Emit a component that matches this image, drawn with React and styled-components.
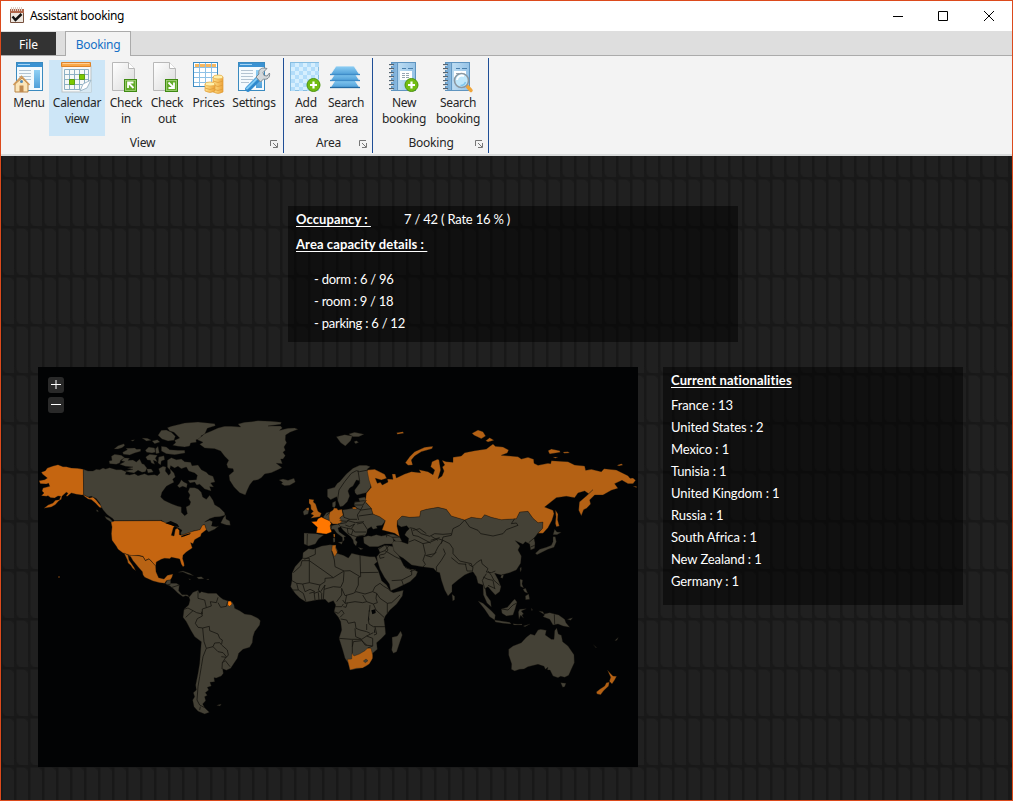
import React from "react";
import styled, { createGlobalStyle } from "styled-components";

const Global = createGlobalStyle`
  * { box-sizing: border-box; }
  body { margin: 0; background: #1f1f1f; }
`;

const Window = styled.div`
  width: 1013px;
  height: 801px;
  display: flex;
  flex-direction: column;
  border: 1px solid #dc4a1c;
  overflow: hidden;
  font-family: "Noto Sans", "Open Sans", sans-serif;
  font-size: 12px;
  color: #262626;
`;

const TitleBar = styled.header`
  flex: none;
  height: 30px;
  background: #fff;
  display: flex;
  align-items: center;
  padding-left: 8px;
`;

const AppIcon = styled.svg`
  margin-top: -2px;
`;

const Title = styled.span`
  flex: 1;
  margin-left: 5px;
  padding-bottom: 1px;
  font-size: 12px;
  letter-spacing: -0.36px;
  color: #000;
`;

const CaptionButton = styled.button`
  width: 46px;
  height: 30px;
  border: 0;
  padding: 0;
  padding-left: ${(p) => p.$shift || 0}px;
  background: none;
  display: grid;
  place-items: center;
`;

const TabStrip = styled.nav`
  flex: none;
  height: 25px;
  background: #dedede;
  border-bottom: 1px solid #ababab;
  display: flex;
  align-items: flex-end;
`;

const FileTab = styled.div`
  width: 55px;
  height: 23px;
  background: #333;
  color: #fff;
  display: grid;
  place-items: center;
  padding-top: 2px;
  letter-spacing: -0.1px;
`;

const ActiveTab = styled.div`
  width: 66px;
  height: 25px;
  margin: 0 0 -1px 9px;
  padding-top: 1px;
  border: 1px solid #ababab;
  border-bottom: 0;
  background: #f3f3f3;
  color: #1470c6;
  display: grid;
  place-items: center;
  letter-spacing: -0.3px;
`;

const Ribbon = styled.section`
  flex: none;
  height: 100px;
  background: #f3f3f3;
  border-bottom: 2px solid #d8dada;
  display: flex;
  padding-top: 2px;
`;

const Group = styled.div`
  width: ${(p) => p.$w}px;
  height: 95px;
  padding: 2px 0 0 ${(p) => p.$pad}px;
  border-right: 1px solid #1f4e96;
  display: flex;
  flex-direction: column;
`;

const Tools = styled.div`
  display: flex;
  height: 76px;
`;

const Tool = styled.button`
  width: ${(p) => p.$w}px;
  height: 76px;
  padding: 0;
  border: 0;
  background: ${(p) => (p.$on ? "#cde6f7" : "none")};
  display: flex;
  flex-direction: column;
  align-items: center;
  font: inherit;
  color: inherit;
`;

const ToolLabel = styled.span`
  margin-top: 1px;
  line-height: 16px;
  white-space: pre;
  text-align: center;
  letter-spacing: -0.3px;
`;

const GroupFooter = styled.div`
  height: 17px;
  display: grid;
  grid-template-columns: 15px 1fr 14px;
  align-items: center;
  text-align: center;
  margin-left: -${(p) => p.$pad}px;
  padding-bottom: 4px;
  line-height: 12px;
  letter-spacing: -0.2px;
`;

const Launcher = styled.svg`
  margin: 4px 0 0 1px;
`;

const Desk = styled.main`
  flex: 1;
  padding: 50px 49px 0 37px;
  display: flex;
  flex-direction: column;
  color: #fff;
  font-family: Lato, sans-serif;
  font-size: 13px;
  background-color: #202020;
  background-image: linear-gradient(45deg, #191919 3px, transparent 5px, transparent calc(100% - 5px), #191919 calc(100% - 3px)),
    linear-gradient(#181818 0 2px, transparent 3px),
    linear-gradient(90deg, #181818 0 2px, transparent 3px);
  background-size: 14px 49px;
  background-position: -1px 21px;
`;

const Panel = styled.section`
  width: ${(p) => p.$w}px;
  height: ${(p) => p.$h}px;
  padding: 2px 8px;
  background: rgba(0, 0, 0, 0.5);
`;

const OccupancyPanel = styled(Panel)`
  margin-left: 250px;
`;

const Lower = styled.div`
  display: flex;
  gap: 25px;
  margin-top: 25px;
`;

const Heading = styled.h2`
  margin: 0;
  width: max-content;
  font-size: 13px;
  font-weight: 700;
  line-height: 22px;
  letter-spacing: ${(p) => p.$track || "0.1px"};
  text-decoration: underline;
  text-underline-offset: 2px;
  white-space: pre;
`;

const OccupancyRow = styled.div`
  display: flex;
  gap: 33px;
  line-height: 22px;
  margin-bottom: 3px;
`;

const Rate = styled.span`
  letter-spacing: -0.2px;
`;

const Capacity = styled.ul`
  margin: 13px 0 0 18px;
  padding: 0;
  list-style: none;
`;

const Countries = styled.ul`
  margin: 3px 0 0;
  padding: 0;
  list-style: none;
`;

const Line = styled.li`
  line-height: 22px;
  letter-spacing: ${(p) => p.$track || "-0.1px"};
`;

const MapFrame = styled.div`
  width: 600px;
  height: 400px;
  background: #020304;
  position: relative;
`;

const ZoomStack = styled.div`
  position: absolute;
  left: 10px;
  top: 10px;
  display: flex;
  flex-direction: column;
  gap: 4px;
`;

const ZoomButton = styled.button`
  width: 16px;
  height: 16px;
  padding: 0;
  border: 0;
  border-radius: 3px;
  background: #292929;
  color: #fff;
  display: grid;
  place-items: center;
`;

const Icon = ({ children }) => (
  <svg width="34" height="34" viewBox="0 0 34 34" fill="none">
    <defs>
      <linearGradient id="page" x1="0" y1="0" x2="1" y2="1">
        <stop offset="0" stopColor="#fff" />
        <stop offset="1" stopColor="#dadada" />
      </linearGradient>
      <linearGradient id="blue" x1="0" y1="0" x2="0" y2="1">
        <stop offset="0" stopColor="#8fd0f5" />
        <stop offset="1" stopColor="#4f9fd8" />
      </linearGradient>
      <linearGradient id="gold" x1="0" y1="0" x2="1" y2="0">
        <stop offset="0" stopColor="#ffe18a" />
        <stop offset="1" stopColor="#eda33a" />
      </linearGradient>
      <linearGradient id="book" x1="0" y1="0" x2="1" y2="0">
        <stop offset="0" stopColor="#6fa5d2" />
        <stop offset=".25" stopColor="#8fbce0" />
        <stop offset=".3" stopColor="#bcdcf2" />
        <stop offset="1" stopColor="#94c2e6" />
      </linearGradient>
    </defs>
    {children}
  </svg>
);

const AppWindow = ({ x }) => (
  <g transform={`translate(${x} 0)`}>
    <rect x=".5" y="2.5" width="26" height="28" fill="#f4fafd" stroke="#3a8abf" />
    <path d="M1 3h25v4H1z" fill="#3b92d2" />
    <path d="M2 4.500h12" stroke="#a5d5f5" />
    <path d="M18 10h6v18h-6z" fill="url(#blue)" />
    <path d="M3 10.500h12M3 13.500h12M3 16.500h12M3 19.500h12M3 22.500h8" stroke="#b3c4d2" />
  </g>
);

const MenuIcon = () => (
  <Icon>
    <AppWindow x={4} />
    <path d="M3 24v8h13v-8l-6-6z" fill="#fbe5b8" stroke="#b98445" />
    <path d="M1.500 25l8-8.500 8 8.500" stroke="#d19a5a" strokeWidth="1.800" />
    <path d="M7.500 25.500h4v6.500h-4z" fill="#c08a50" />
    <circle cx="9.500" cy="21.500" r="1.500" fill="#4e88b8" />
  </Icon>
);

const CalendarIcon = () => (
  <Icon>
    <rect x="2" y="6" width="29" height="26" fill="#f6f8f8" stroke="#bcc3c6" />
    <path d="M1.500 2.500h29v4h-29z" fill="#f9a94a" stroke="#df8328" />
    <path d="M2.500 3.500h27" stroke="#ffcf97" />
    <path d="M4.500 9.500h24v20h-24zM9.500 9v21M14.500 9v21M19.500 9v21M24.500 9v21M4 14.500h25M4 19.500h25M4 24.500h25" stroke="#8db0c4" />
    <path d="M9.500 19.500h5v5h-5zM19.500 14.500h5v5h-5z" fill="#7cc900" stroke="#5a9c14" />
    <path d="M20 32l3-8 8-3v11z" fill="#d7e8f2" />
    <path d="M20 31l3-7 8-4-4 8z" fill="#fff" stroke="#9fb9c9" />
  </Icon>
);

const CheckIcon = ({ out }) => (
  <Icon>
    <path d="M3.500 2.500h16l6 6v22h-22z" fill="url(#page)" stroke="#b8b8b8" />
    <path d="M19.500 2.500v6h6" fill="#fff" stroke="#b8b8b8" />
    <rect x="15.500" y="19.500" width="12" height="12" fill="#62ab28" stroke="#3f8a12" />
    <rect x="16.500" y="20.500" width="10" height="10" stroke="#a5d27e" strokeWidth=".8" />
    <path d={out ? "M18.500 22.500l5 5M24 22.500v5.500h-5.500" : "M19 28v-5.500h5.500M19.500 23l5 5"} stroke="#fff" strokeWidth="1.800" />
  </Icon>
);

const Coin = ({ x, y, n }) => (
  <g transform={`translate(${x} ${y})`}>
    <path d={`M0 2v${n * 4 - 1}q5 3 10 0V2z`} fill="url(#gold)" stroke="#e09c38" strokeWidth=".7" />
    {Array.from({ length: n - 1 }, (_, i) => (
      <path key={i} d={`M0 ${6 + i * 4}q5 3 10 0`} stroke="#e09c38" strokeWidth=".8" />
    ))}
    <ellipse cx="5" cy="2" rx="5" ry="2" fill="#fff0ac" stroke="#e8b04c" strokeWidth=".8" />
  </g>
);

const PricesIcon = () => (
  <Icon>
    <rect x="1.500" y="2.500" width="24" height="24" fill="#fff" stroke="#3b8bc4" />
    <path d="M3 4h21v3H3z" fill="#f8b860" />
    <path d="M7.500 3v23M13.500 3v23M19.500 3v23M2 7.500h23M2 12.500h23M2 17.500h23M2 22.500h23" stroke="#8ec1e6" />
    <Coin x={21} y={15} n={4} />
    <Coin x={13} y={22} n={2} />
  </Icon>
);

const SettingsIcon = () => (
  <Icon>
    <AppWindow x={1} />
    <path d="M11 29L21 19" stroke="#2f8ace" strokeWidth="5.500" strokeLinecap="round" />
    <path d="M10 28.500L20 18.500" stroke="#80cbf5" strokeWidth="2" strokeLinecap="round" />
    <path d="M19 17l3-3c-1-3 1-6 5-6l3 .500-4 4 1 3 3 .500 2.500-3c1 5-3 7-6 6l-3 3z" fill="#d3d8db" stroke="#7f8a92" />
  </Icon>
);

const PlusBadge = () => (
  <g>
    <circle cx="24.500" cy="25" r="6.500" fill="#72bd12" stroke="#4c930f" />
    <path d="M24.500 21.500v7M21 25h7" stroke="#fff" strokeWidth="2.200" />
  </g>
);

const checks = [];
for (let r = 0; r < 7; r++) for (let c = 0; c < 7; c++) if ((r + c) % 2 === 0) checks.push([c, r]);

const AddAreaIcon = () => (
  <Icon>
    <rect x="1.500" y="2.500" width="28" height="28" fill="#d6effe" stroke="#87bde0" />
    {checks.map(([c, r]) => (
      <rect key={c + "-" + r} x={2 + c * 4} y={3 + r * 4} width="4" height="4" fill="#b3ddfa" />
    ))}
    <PlusBadge />
  </Icon>
);

const LayersIcon = () => (
  <Icon>
    {[19, 12, 6].map((y, i) => (
      <g key={y} transform="translate(-1 0)">
        <path d={`M8 ${y}h18l5.500 8.500h-29z`} fill="url(#blue)" stroke="#f3f3f3" strokeWidth=".8" />
        <path d={`M2 ${y + 8.500}h30`} stroke={i === 0 ? "#236aa3" : "#3f8cc8"} strokeWidth="1.300" />
      </g>
    ))}
  </Icon>
);

const Book = () => (
  <g>
    <rect x="4.500" y="2.500" width="24" height="28" fill="url(#book)" stroke="#5f94bf" />
    <path d="M10.500 3v27" stroke="#6499c4" />
    <path d="M15 8.500h4M21 8.500h5" stroke="#4a80ad" />
    <rect x="13" y="11" width="12" height="9" fill="#fff" />
    <path d="M15 13.500h8M15 15.500h8M15 17.500h8" stroke="#98a6b2" strokeDasharray="3 1" />
    <path d="M2 4.500h5M2 8.500h5M2 12.500h5M2 16.500h5M2 20.500h5M2 24.500h5M2 28.500h5" stroke="#58646e" />
    <path d="M2 5.500h4M2 9.500h4M2 13.500h4M2 17.500h4M2 21.500h4M2 25.500h4M2 29.500h4" stroke="#d5dde3" />
  </g>
);

const NewBookingIcon = () => (
  <Icon>
    <Book />
    <PlusBadge />
  </Icon>
);

const SearchBookingIcon = () => (
  <Icon>
    <Book />
    <path d="M26 26l4 4.500" stroke="#efa63c" strokeWidth="3.500" strokeLinecap="round" />
    <circle cx="20.500" cy="20.500" r="7" fill="#bfe7fb" stroke="#8c98a1" strokeWidth="1.600" />
    <path d="M16 20a5 5 0 017-4" stroke="#fff" strokeWidth="2" />
    <path d="M24.500 22a5 5 0 01-5 3.500" stroke="#7fc6ee" strokeWidth="1.500" />
  </Icon>
);

const LAND = "#444136";
const RUST = "#b46114";

const COUNTRIES = [
  ["#c56510", 0, 0, "M136 307L118 304 100 303 85 299 75 299 60 293 45 297 28 303 22 311 10 316 14 322 28 333 20 338 3 341 7 350 25 351 32 349 35 358 15 363 12 372 18 378 10 386 25 388 30 386 38 392 50 393 60 387 68 388 64 398 52 400 45 408 30 414 18 424 40 420 52 413 62 402 70 397 72 388 80 380 85 376 90 379 84 387 88 388 100 378 115 382 130 384 137 383 145 387 155 393 165 390 175 400 183 410 190 416 191 423 184 421 172 408 160 398 150 396 137 386z"],
  [LAND, 0, 0, "M136 307L150 312 165 312 175 307 185 308 195 303 203 306 215 302 235 308 250 308 265 314 262 322 275 324 290 320 300 326 320 320 330 325 350 323 358 326 366 318 362 305 375 298 384 300 382 312 392 325 398 318 396 305 408 318 412 330 404 337 408 346 396 352 385 358 372 376 368 390 378 400 400 410 418 417 430 420 430 436 440 446 448 440 444 420 455 414 458 405 452 395 456 384 450 374 455 362 470 362 480 366 490 376 494 390 505 397 515 385 525 400 530 413 545 422 560 437 561 445 545 449 530 450 515 455 500 465 515 460 525 464 520 477 535 479 542 477 530 487 512 495 505 488 500 473 494 474 486 488 465 492 462 494 440 502 430 505 428 498 432 490 425 485 400 472 385 470 370 460 229 461 225 455 210 445 205 440 195 428 190 420 185 408 175 395 160 388 150 390 137 383z"],
  [LAND, 0, 0, "M548 468L556 452 563 444 564 456 575 462 577 475 565 474zM200 448L215 454 228 468 220 466 205 456zM175 428L180 430 181 435 176 433zM215 290L213 282 222 280 220 268 230 262 250 265 260 272 248 280 245 288 235 292zM245 292L260 284 250 281 258 272 275 274 270 280 285 279 295 285 305 276 312 290 318 292 327 304 322 314 312 316 300 310 288 318 275 316 260 312 285 307 268 304 285 300 262 298zM228 246L240 236 258 230 260 236 252 242 240 246zM254 256L268 248 264 244 290 243 296 247 308 246 308 253 290 258 275 264 256 262zM312 213L328 214 340 220 325 222zM342 222L358 218 366 225 350 230zM278 220L290 218 285 223zM322 250L332 240 350 243 352 256 342 258 326 256zM323 270L335 262 358 265 352 274 358 284 346 280 350 292 340 288 337 280 328 279zM352 246L360 238 364 258 354 260zM370 238L385 240 395 248 420 250 440 250 441 258 410 263 385 260 370 252zM326 305L340 306 346 315 330 318zM362 270L378 266 380 278 370 282 368 294 360 288zM388 280L400 272 415 278 430 276 440 284 458 286 462 296 480 294 490 308 505 316 512 323 525 328 531 345 518 348 527 360 515 359 520 372 500 366 485 352 476 354 470 345 456 348 450 340 475 338 478 325 470 318 452 312 445 300 430 305 420 298 410 303 398 296 395 308 388 300zM425 348L430 338 436 344 448 350 446 362 434 358 424 362 418 356zM388 182L400 178 425 172 440 168 480 165 530 170 532 176 508 184 500 202 490 206 488 217 474 218 475 226 458 228 455 237 440 240 420 238 404 235 413 227 410 220 425 213 408 196 395 192zM360 205L370 190 385 189 400 196 412 208 408 220 390 222 372 216z"],
  [LAND, 0, 0, "M478 218L495 205 500 200 520 192 540 183 560 178 580 178 608 180 600 171 620 166 640 164 660 161 700 163 730 166 728 172 690 177 728 177 733 183 725 190 750 184 770 183 780 187 756 196 743 204 742 219 746 227 738 240 742 250 735 256 742 266 735 276 728 276 733 290 715 289 732 302 718 309 700 317 680 321 670 332 660 338 645 341 635 354 628 369 622 384 605 377 588 360 575 340 573 325 587 313 585 305 570 303 566 292 572 280 560 268 548 252 530 245 500 243 485 232 495 226z"],
  ["#c56510", 0, 0, "M229 462L368 461 385 468 400 472 410 478 406 482 400 505 408 507 412 487 418 484 424 490 424 503 430 505 440 502 465 493 486 488 493 475 500 473 505 488 490 500 488 508 470 518 465 530 458 527 463 543 445 555 435 565 434 575 438 588 439 597 435 599 430 592 425 576 415 574 400 571 395 575 380 574 370 577 355 585 353 598 348 592 340 582 333 575 322 580 315 568 300 565 280 566 262 560 255 558 240 547 235 538 222 520 220 500 222 480 219 466z"],
  ["#b86314", 0, 519, "M258 39L270 46 300 47 315 50 322 62 333 57 342 66 353 78 354 95 362 113 378 117 388 106 405 102 402 112 397 120 385 122 380 130 365 128 345 123 320 112 315 105 313 95 300 80 285 62 278 50 270 46 273 60 280 70 288 82 293 92 283 84 278 76 270 69 268 60z"],
  ["#a85810", 0, 519, "M61 109h4v4h-4z"],
  [LAND, 0, 519, "M382 131L388 121 398 120 398 130 415 130 424 135 422 152 432 164 448 164 455 171 443 167 435 170 420 160 408 148 396 138zM420 97L435 93 455 100 467 107 450 103 435 96zM476 112L490 110 498 116 482 117zM452 116l7 2-5 1zM506 117h7v2h-6z"],
  [LAND, 0, 519, "M453 172L465 157 480 151 485 160 490 155 510 160 535 160 545 170 555 178 568 182 582 185 588 195 590 205 605 212 620 222 640 225 660 235 667 242 665 255 650 275 645 290 643 308 635 322 615 328 602 340 598 355 588 370 578 385 565 391 554 386 556 400 550 408 535 414 528 413 530 425 516 427 520 438 508 442 512 450 502 458 508 466 500 470 503 482 494 492 500 503 514 517 500 522 480 514 468 500 464 480 470 470 466 458 475 450 473 435 480 400 485 370 488 330 490 305 470 290 458 270 445 245 435 232 438 208 452 195 456 180zM536 496l14-4-4 6z"],
  ["#ff7b05", 0, 519, "M570 184L578 183 582 192 575 199 569 195z"],
  [LAND, 600, 99, "M123 240L135 237 150 241 168 235 172 246 155 256 140 257 130 252 134 247zM295 110L320 104 343 108 338 122 322 138 308 128zM332 102L350 97 378 103 362 110 345 110zM348 125L355 122 362 127 353 131zM268 268L290 262 298 250 305 245 325 222 345 205 365 196 385 196 397 200 388 207 393 224 400 240 398 262 385 278 357 285 351 278 350 270 365 250 365 242 355 240 345 258 335 264 330 273 335 288 328 305 315 318 306 320 300 304 296 290 278 299 268 290zM195 335L205 325 213 330 210 342 198 346zM198 399L235 401 257 405 242 416 232 432 212 438 198 432zM255 352L265 338 275 336 276 362 264 358zM283 320L283 308 293 303 293 315 290 323zM313 330L345 325 357 325 348 315 350 307 365 305 362 295 380 291 385 300 385 310 400 325 405 342 425 350 442 362 432 376 415 378 418 385 405 388 400 380 388 388 386 400 380 408 364 408 356 410 352 420 358 426 354 438 347 430 345 420 338 410 324 398 315 390 308 380 300 372 310 365 305 355 316 345zM276 378L300 372 308 380 300 384 303 395 324 410 318 411 319 420 314 425 313 412 296 399 288 388 278 388zM300 427L314 425 311 433zM285 414L291 414 291 426 286 427zM360 442l16 4-8 3zM376 412L390 407 400 409 415 404 430 408 445 405 465 412 468 428 462 432 440 432 420 440 395 440 378 430zM445 402L465 403 485 411 492 424 477 428 462 412z"],
  [RUST, 600, 99, "M213 297L228 299 226 306 233 312 236 322 240 334 250 340 246 350 218 355 227 346 218 342 226 334 219 328 218 315 213 310zM205 324L213 323 213 331 206 331z"],
  ["#ff7700", 600, 99, "M220 365L236 364 240 356 250 351 262 357 282 365 276 378 281 396 265 402 255 401 235 398 238 382 228 373z"],
  [RUST, 600, 99, "M275 337L285 330 288 324 297 325 300 330 312 328 316 345 305 354 312 364 304 372 283 372 274 362 273 348zM286 402h5v10h-4zM343 322L352 321 357 327 344 327z"],
  [LAND, 696, 489, "M115 56L130 58 155 48 180 44 195 46 203 62 200 70 220 76 235 84 245 70 270 76 300 80 315 80 322 95 313 103 325 122 335 152 350 165 360 183 370 188 400 181 397 198 380 222 360 240 346 258 342 268 345 290 347 312 335 325 320 338 322 358 308 370 305 390 290 408 270 415 240 420 235 400 225 385 218 360 207 325 215 300 212 275 205 262 192 245 197 225 190 212 175 218 165 208 140 210 108 216 90 205 75 190 62 170 66 150 66 130 75 110 98 85 99 68z"],
  [RUST, 696, 489, "M232 388L245 387 246 370 252 378 268 372 285 362 293 354 303 355 308 375 308 385 298 402 278 414 260 415 240 420zM187 46L198 45 197 54 202 67 194 80 185 62z"],
  [LAND, 696, 489, "M367 345L366 322 382 318 392 303 397 315 390 335 380 365 370 370 365 360zM280 393L288 387 294 392 286 398z"],
  [LAND, 696, 489, "M322 92L320 80 330 68 324 55 345 46 375 50 372 62 385 75 393 90 402 108 412 115 422 118 430 118 443 125 438 138 420 155 400 165 380 175 362 182 358 162 343 142 330 118z"],
  [LAND, 0, 0, "M1078 461L1092 447 1115 451 1145 449 1148 432 1165 427 1200 421 1225 427 1240 447 1280 459 1300 451 1330 455 1340 443 1360 451 1390 458 1435 455 1445 435 1470 433 1485 454 1500 467 1515 465 1514 484 1500 498 1488 514 1491 527 1490 544 1478 549 1475 531 1462 524 1455 532 1442 526 1432 521 1446 537 1440 549 1450 567 1448 589 1435 609 1415 617 1390 624 1370 619 1380 637 1389 659 1385 674 1372 684 1360 671 1350 659 1342 664 1345 684 1358 702 1360 720 1347 708 1336 683 1335 654 1320 649 1315 629 1305 614 1295 617 1280 624 1260 639 1242 654 1242 674 1230 687 1220 669 1210 639 1205 617 1196 614 1186 604 1151 599 1121 594 1096 574 1084 567 1068 551 1062 529 1068 522 1090 524 1110 531 1112 514 1100 504 1105 494 1114 485 1106 476 1090 480 1080 474z"],
  [LAND, 1200, 159, "M292 400L305 388 325 382 340 376 345 365 345 350 352 350 355 365 348 382 330 388 315 395 297 404zM345 344L350 328 357 336 370 337 357 344zM190 466L197 464 194 475 188 473zM246 444l4-2 0 8-3 6zM246 478l8 2-2 12 5 12-10-5zM255 508l8-3 6 15-9-4zM262 528l10-6 3 16-12 1zM42 523l8 6 0 10-6 4z"],
  [LAND, 1200, 519, "M120 183L135 190 160 212 172 225 170 240 155 230 140 208zM170 240L190 243 215 247 220 252 195 250 172 246zM190 207L208 202 222 185 230 177 237 186 232 205 225 225 205 228 192 220zM241 216L245 208 265 206 250 213 257 222 252 225 257 235 248 226 243 238zM302 213L315 215 318 222 335 218 362 225 380 238 384 248 395 262 375 258 360 252 345 255 335 238 315 230 320 224zM225 251l15 2 12-1v3l-25 0zM256 258l20-6-15 8zM280 204l4 6-3 2zM388 238l16-5-6 8zM466 314l10 9-2 0zM530 302l11-10-4 9z"],
  [LAND, 1200, 519, "M212 328L225 318 250 308 265 292 278 282 290 286 300 270 308 268 325 271 322 285 340 298 348 298 350 272 356 264 361 282 370 286 374 305 390 318 408 344 409 368 400 388 392 406 380 412 368 409 360 413 345 408 336 390 328 390 330 382 322 388 318 379 300 373 270 380 258 387 245 388 230 393 220 388 221 372 212 345zM368 428L384 430 380 440 374 442z"],
  [RUST, 1200, 519, "M508 390L519 402 525 408 536 409 530 420 522 432 514 424 518 412zM514 426L512 438 497 452 488 464 477 462 475 456 485 448 500 438 505 428z"],
  [RUST, 0, 0, "M987 309L1010 307 1040 322 1046 334 1030 339 1012 334 1018 349 1027 346 1033 354 1050 345 1048 336 1065 337 1062 321 1072 321 1075 333 1100 321 1120 314 1148 317 1143 308 1170 314 1185 323 1190 309 1178 299 1182 284 1198 277 1203 278 1208 309 1200 335 1212 327 1218 312 1213 300 1220 294 1212 280 1225 284 1245 286 1245 271 1270 267 1280 257 1310 251 1345 246 1365 231 1372 238 1395 240 1412 249 1408 258 1390 265 1440 269 1450 276 1470 271 1487 277 1488 289 1500 295 1530 289 1538 290 1540 281 1590 284 1610 294 1640 297 1643 310 1660 307 1690 314 1698 305 1735 309 1770 326 1776 334 1785 333 1793 340 1785 350 1770 350 1752 340 1730 350 1740 364 1720 370 1695 384 1670 384 1655 399 1658 411 1646 424 1637 428 1630 446 1622 430 1624 405 1645 387 1665 368 1652 380 1640 372 1620 378 1610 392 1585 388 1555 392 1520 420 1545 430 1548 440 1542 460 1530 482 1515 499 1500 499 1514 484 1515 465 1500 467 1485 454 1470 433 1445 435 1435 455 1390 458 1360 451 1340 443 1330 455 1300 451 1280 459 1240 447 1225 427 1200 421 1165 427 1148 432 1145 449 1115 451 1092 447 1078 461 1077 478 1085 509 1070 499 1032 489 1042 461 1025 449 1005 441 1000 424 982 404 985 379 1000 361 993 339z"],
  [RUST, 600, 99, "M502 188L515 170 530 155 560 142 585 139 582 146 550 155 530 168 520 180 524 195 510 196zM476 98L495 95 497 100 478 103z"],
  [RUST, 1200, 159, "M102 40L120 30 135 35 143 48 130 56 108 46zM143 62L155 53 168 61 150 66zM330 92L340 87 365 92 367 97 335 102zM375 96L390 95 395 99 378 100zM345 111L360 111 352 115zM352 270L360 282 359 300 364 318 355 320 352 310 354 290zM537 136L550 131 555 135 543 138zM585 199L595 199 596 203z"],
];

const BORDERS = [
  [0, 519, "M480 155L480 175 500 180 505 203 493 207 493 222 476 218 465 212 443 232M438 208L450 204 465 212M490 215L493 228 478 236 472 250 480 262 494 264 514 259 515 272 540 282 545 295 553 300 551 312M494 264L496 285 498 305 505 325 525 320 530 309 545 308 551 315 568 330 571 345 565 352 550 350M505 325L495 350 490 380 485 410 480 440 477 480 485 495 500 503M552 387L553 368 562 362 576 380M525 320L540 335 555 338 565 350 553 368M505 203L520 198 517 185 535 188 540 172M540 188L548 202 565 199 569 184M388 135L398 132M402 142L424 135M487 500L485 510"],
  [600, 99, "M298 304L303 270 320 245 340 220 355 212 365 215 390 210M360 212L365 243M350 305L380 302M348 315L375 315 385 300M375 317L366 333 358 345 362 360M357 325L370 330 400 326M313 330L318 352 335 358 357 358M362 348L405 342M275 338L265 346M277 366L283 372M305 362L325 364 335 358M300 372L325 368 330 362 352 368 378 365M322 375L335 380 350 372M308 380L325 384 345 388 350 396 384 396M328 384L330 400 340 405M345 390L340 405 355 410 380 405M350 372L340 386M357 372L375 368 388 388M208 402L207 436M253 403L240 401M278 388L282 377M446 412L445 402M485 411L463 412M419 450L440 435M442 435L450 450 440 462 425 465"],
  [696, 489, "M98 85L118 85 118 92 165 125 190 143 222 123 240 122 270 140M118 92L96 92 92 108 70 128M118 92L118 158 98 162 80 160 66 152M136 55L136 73 103 88M185 62L193 90 195 110 222 123M270 76L272 140 265 142 265 165 255 185M270 128L325 127M118 158L150 165 165 155 165 145 190 143M165 165L162 178 190 170 212 172 220 155 222 125M215 175L215 195 200 215M150 165L145 180 155 190 155 210M118 190L132 186 135 210M132 190L150 184M80 160L85 180 65 180M85 180L100 190 108 215M98 162L105 185 120 178 135 185M145 188L147 210M152 185L165 165M162 178L160 208M215 175L225 197 250 190 258 185 285 192 308 185 320 190 330 205 352 220 365 218 390 195M308 185L315 170 330 160 340 168 360 180M218 210L225 220 255 215 278 218 290 215 310 222M230 195L225 220M278 195L290 215M320 190L318 205 322 218 310 222 318 240 342 262M352 220L352 250M195 230L215 230 220 222M220 230L228 232 232 218M192 245L205 250 215 240 222 250 210 262M212 267L230 270 235 280 255 276 258 295 270 300 290 305 300 310M298 240L295 270 297 282 310 290 345 290M255 295L257 320 275 328 290 318 310 308M207 325L245 328 275 328M247 330L247 370M247 350L250 335 275 332 290 345M275 330L285 345 308 348 308 325 290 318M315 290L320 312 312 315M293 354L308 348M300 225L298 245M290 282L290 300M343 82L330 85 328 75M358 45L345 62 328 68M345 62L375 80 392 88M405 112L425 120 425 135 395 150 365 152M395 150L400 165M420 125L438 118"],
  [0, 0, "M1112 525L1130 518 1155 530 1162 560 1155 580 1162 592 1155 600M1155 530L1178 525 1200 515 1215 520 1200 540 1190 560 1165 565M1162 565L1180 570 1195 555M1215 520L1235 530 1245 545 1245 560M1216 545L1222 560 1210 580 1195 600 1196 614M1245 560L1265 582 1300 590 1303 600 1318 585 1330 578 1332 590 1350 605 1345 615 1360 617 1372 612M1240 572L1262 590 1285 592M1282 590L1287 612 1302 612M1292 592L1305 600 1303 614M1280 459L1265 475 1245 485 1240 505 1215 510 1210 530M1280 459L1295 480 1320 490 1328 500 1365 507 1395 500 1405 488 1440 475 1435 468 1420 470 1430 455M1115 482L1130 485 1150 500 1175 508 1190 500 1215 502 1240 500M1120 485L1125 505 1140 508 1178 528M1125 490L1145 485 1165 500M1180 508L1200 520M1178 520L1205 512M1345 620L1333 640 1340 665M1335 630L1350 637 1365 640 1370 665M1350 612L1360 625 1368 640 1385 655M1350 655L1372 665M1472 527L1492 510M1478 540L1490 535"],
  [1200, 519, "M192 207L210 210 225 195 235 190M349 223L350 252"],
];

const LAKES = [
  [0, 0, "M382 469L398 462 418 471 424 480 408 478 398 474zM430 507L440 503 458 498 456 502 440 508 430 511zM515 455L530 457 545 454 546 466 535 475 522 475 524 462z"],
  [696, 489, "M304 241L316 238 317 249 307 253zM296 258l2 10-2 6zM313 293l3 15-3 0z"],
];

const WorldMap = () => (
  <svg width="600" height="400" viewBox="0 0 1800 1200" strokeLinejoin="round">
    {COUNTRIES.map(([fill, x, y, d], i) => (
      <path key={i} transform={`translate(${x} ${y})`} d={d} fill={fill} stroke="#17150f" strokeWidth="1" />
    ))}
    {BORDERS.map(([x, y, d], i) => (
      <path key={i} transform={`translate(${x} ${y})`} d={d} fill="none" stroke="#15140f" strokeWidth="2.400" />
    ))}
    {LAKES.map(([x, y, d], i) => (
      <path key={i} transform={`translate(${x} ${y})`} d={d} fill="#020304" />
    ))}
  </svg>
);

const GROUPS = [
  {
    name: "View", w: 283, pad: 8,
    tools: [
      ["Menu", 40, MenuIcon],
      ["Calendar\nview", 56, CalendarIcon, true],
      ["Check\nin", 42, CheckIcon],
      ["Check\nout", 40, () => <CheckIcon out />],
      ["Prices", 43, PricesIcon],
      ["Settings", 48, SettingsIcon],
    ],
  },
  { name: "Area", w: 89, pad: 2, tools: [["Add\narea", 40, AddAreaIcon], ["Search\narea", 40, LayersIcon]] },
  { name: "Booking", w: 116, pad: 4, tools: [["New\nbooking", 54, NewBookingIcon], ["Search\nbooking", 54, SearchBookingIcon]] },
];

const NATIONALITIES = [
  ["France", 13], ["United States", 2], ["Mexico", 1], ["Tunisia", 1], ["United Kingdom", 1],
  ["Russia", 1], ["South Africa", 1], ["New Zealand", 1], ["Germany", 1],
];

export default function App() {
  return (
    <Window>
      <Global />
      <TitleBar>
        <AppIcon width="16" height="17" viewBox="0 0 16 17">
          <path d="M1.500 3.500h13v12h-13z" fill="#eee7df" stroke="#76513e" />
          <path d="M1 2h14v4H1z" fill="#b0674c" />
          <path d="M2.500 0v4M4.500 0v4M6.500 0v4M8.500 0v4M10.500 0v4M12.500 0v4" stroke="#ddd0c8" />
          <path d="M3.500 9.500l3 3.500 6-6" fill="none" stroke="#111" strokeWidth="2.500" />
        </AppIcon>
        <Title>Assistant booking</Title>
        <CaptionButton aria-label="Minimize" $shift={2}>
          <svg width="10" height="10"><path d="M0 5.500h10" stroke="#000" /></svg>
        </CaptionButton>
        <CaptionButton aria-label="Maximize">
          <svg width="10" height="10"><path d="M.500 .500h9v9h-9z" fill="none" stroke="#000" /></svg>
        </CaptionButton>
        <CaptionButton aria-label="Close">
          <svg width="10" height="10"><path d="M0 0l10 10M10 0L0 10" stroke="#000" /></svg>
        </CaptionButton>
      </TitleBar>
      <TabStrip>
        <FileTab>File</FileTab>
        <ActiveTab>Booking</ActiveTab>
      </TabStrip>
      <Ribbon>
        {GROUPS.map((g) => (
          <Group key={g.name} $w={g.w} $pad={g.pad}>
            <Tools>
              {g.tools.map(([label, w, Glyph, on]) => (
                <Tool key={label} $w={w} $on={on}>
                  <Glyph />
                  <ToolLabel>{label}</ToolLabel>
                </Tool>
              ))}
            </Tools>
            <GroupFooter $pad={g.pad}>
              <i />
              <span>{g.name}</span>
              <Launcher width="9" height="9" viewBox="0 0 9 9">
                <path d="M.500 6V.500H7M3 3l4 4M7.500 3v4.500H3" fill="none" stroke="#777" />
              </Launcher>
            </GroupFooter>
          </Group>
        ))}
      </Ribbon>
      <Desk>
        <OccupancyPanel $w={450} $h={136}>
          <OccupancyRow>
            <Heading $track="0.08px">{"Occupancy : "}</Heading>
            <Rate>7 / 42 ( Rate 16 % )</Rate>
          </OccupancyRow>
          <Heading>{"Area capacity details : "}</Heading>
          <Capacity>
            <Line $track="-0.25px">- dorm : 6 / 96</Line>
            <Line $track="-0.25px">- room : 9 / 18</Line>
            <Line $track="-0.25px">- parking : 6 / 12</Line>
          </Capacity>
        </OccupancyPanel>
        <Lower>
          <MapFrame>
            <WorldMap />
            <ZoomStack>
              <ZoomButton aria-label="Zoom in">
                <svg width="10" height="10"><path d="M0 4.500h10M5 0v9" stroke="#fff" /></svg>
              </ZoomButton>
              <ZoomButton aria-label="Zoom out">
                <svg width="10" height="10"><path d="M0 4.500h10" stroke="#fff" /></svg>
              </ZoomButton>
            </ZoomStack>
          </MapFrame>
          <Panel $w={300} $h={238}>
            <Heading $track="0.12px">Current nationalities</Heading>
            <Countries>
              {NATIONALITIES.map(([name, n]) => (
                <Line key={name}>{name} : {n}</Line>
              ))}
            </Countries>
          </Panel>
        </Lower>
      </Desk>
    </Window>
  );
}
